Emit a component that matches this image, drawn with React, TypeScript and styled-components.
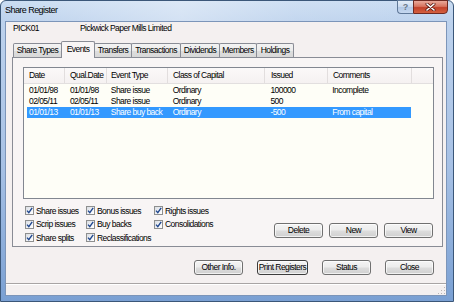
import styled, { createGlobalStyle } from 'styled-components';

const GlobalStyle = createGlobalStyle`
  html, body {
    margin: 0;
    padding: 0;
  }
  body {
    width: 454px;
    height: 302px;
    overflow: hidden;
    font-family: 'Liberation Sans', Arial, sans-serif;
  }
`;

const Window = styled.div`
  box-sizing: border-box;
  width: 454px;
  height: 302px;
  display: flex;
  flex-direction: column;
  border: 1px solid #3b5779;
  border-radius: 6px 6px 0 0;
  background: linear-gradient(to bottom, #cadcf2 0px, #bdd2ed 20px, #a7c1e5 55%, #7aa0d3 100%);
  font-size: 8.5px;
  letter-spacing: -0.55px;
  color: #000;
`;

const TitleBar = styled.div`
  height: 20px;
  display: flex;
  align-items: flex-start;
  background: linear-gradient(
    to right,
    rgba(255, 255, 255, 0) 0%,
    rgba(255, 255, 255, 0.35) 40%,
    rgba(255, 255, 255, 0.1) 65%,
    rgba(255, 255, 255, 0) 100%
  );
`;

const Title = styled.span`
  flex: 1;
  margin-left: 4px;
  font-size: 9px;
  line-height: 19px;
`;

const CaptionButtons = styled.div`
  display: flex;
  margin-right: 5px;
  margin-top: -1px;
`;

const HelpButton = styled.div`
  box-sizing: border-box;
  width: 16px;
  height: 14px;
  border: 1px solid #5f7898;
  border-right: none;
  border-radius: 0 0 0 4px;
  background: linear-gradient(to bottom, #e4edf8 0%, #c9d9ee 50%, #b2c8e6 51%, #c6d8ef 100%);
  color: #6b7888;
  font-weight: bold;
  font-size: 9px;
  line-height: 12px;
  text-align: center;
  letter-spacing: 0;
`;

const CloseButton = styled.div`
  box-sizing: border-box;
  width: 35px;
  height: 14px;
  border: 1px solid #6e2a22;
  border-radius: 0 0 4px 0;
  background: linear-gradient(to bottom, #e9a99a 0%, #d7745f 45%, #c2412a 55%, #d4603f 100%);
  display: flex;
  align-items: center;
  justify-content: center;
`;

const Client = styled.div`
  flex: 1;
  margin: 0 6px 5px 4px;
  border: 1px solid #7c95b9;
  background: #f4f0f0;
  display: flex;
  flex-direction: column;
`;

const Body = styled.div`
  flex: 1;
  padding: 0 3px 0 6px;
  border-bottom: 1px solid #a8a4a4;
  display: flex;
  flex-direction: column;
`;

const InfoRow = styled.div`
  height: 12px;
  line-height: 12px;
  display: flex;
  padding-left: 1px;
`;

const InfoCode = styled.span`
  width: 67px;
`;

const TabStrip = styled.div`
  height: 16px;
  margin-top: 7px;
  padding-left: 1px;
  display: flex;
  align-items: flex-end;
  position: relative;
  z-index: 1;
`;

const Tab = styled.div<{ $w: number; $active?: boolean }>`
  box-sizing: border-box;
  width: ${(p) => p.$w}px;
  height: ${(p) => (p.$active ? 17 : 14)}px;
  margin-bottom: ${(p) => (p.$active ? -1 : 0)}px;
  margin-left: -1px;
  border: 1px solid #898c95;
  border-bottom: none;
  border-radius: 2px 2px 0 0;
  background: ${(p) =>
    p.$active ? '#f8f5f5' : 'linear-gradient(to bottom, #f3f3f3 0%, #ebebeb 50%, #dedede 51%, #d8d8d8 100%)'};
  text-align: center;
  line-height: ${(p) => (p.$active ? 14 : 13)}px;
  white-space: nowrap;
  position: relative;
  z-index: ${(p) => (p.$active ? 2 : 1)};

  &:first-child {
    margin-left: 0;
  }
`;

const Panel = styled.div`
  box-sizing: border-box;
  width: 431px;
  height: 190px;
  border: 1px solid #898c95;
  background: #f8f5f5;
  padding: 9px 8px 0 10px;
  display: flex;
  flex-direction: column;
`;

const ListView = styled.div`
  box-sizing: border-box;
  height: 132px;
  border: 1px solid #828790;
  background: #fefef7;
  overflow: hidden;
`;

const HeaderRow = styled.div`
  height: 15px;
  display: flex;
  padding-left: 3px;
  background: linear-gradient(to bottom, #fbf9f9 0%, #f5f1f1 100%);
  border-bottom: 1px solid #e2dfdf;
`;

const HeaderCell = styled.div<{ $w: number; $pad: number }>`
  box-sizing: border-box;
  width: ${(p) => p.$w}px;
  padding-left: ${(p) => p.$pad}px;
  line-height: 15px;
  border-right: 1px solid #e2dede;
  white-space: nowrap;
`;

const Rows = styled.div`
  padding-top: 1px;
`;

const Row = styled.div<{ $selected?: boolean }>`
  width: 384px;
  height: 11px;
  margin-left: 3px;
  display: flex;
  background: ${(p) => (p.$selected ? '#3399ff' : 'transparent')};
  color: ${(p) => (p.$selected ? '#fff' : '#000')};
`;

const Cell = styled.div<{ $w: number; $pad: number }>`
  box-sizing: border-box;
  width: ${(p) => p.$w}px;
  padding-left: ${(p) => p.$pad}px;
  line-height: 11px;
  white-space: nowrap;
`;

const BottomSection = styled.div`
  display: flex;
  justify-content: space-between;
  margin-top: 5px;
`;

const CheckGrid = styled.div`
  display: grid;
  grid-template-columns: 61px 68px auto;
  grid-auto-rows: 13.5px;
  margin-left: 2px;
`;

const CheckItem = styled.label`
  display: flex;
  align-items: center;
  gap: 2px;
  white-space: nowrap;
`;

const CheckBox = styled.span`
  box-sizing: border-box;
  width: 9px;
  height: 9px;
  border: 1px solid #8e8f8f;
  background: linear-gradient(135deg, #d9dde3 0%, #f3f4f6 60%, #ffffff 100%);
  display: flex;
  align-items: center;
  justify-content: center;
`;

const ButtonRow = styled.div`
  display: flex;
  gap: 6px;
  margin-top: 19px;
  margin-right: 1px;
  align-self: flex-start;
`;

const Button = styled.button<{ $w?: number; $focus?: boolean }>`
  box-sizing: border-box;
  width: ${(p) => p.$w ?? 49}px;
  height: 15px;
  padding: 0;
  border: 1px solid ${(p) => (p.$focus ? '#3c3c3c' : '#707070')};
  border-radius: 3px;
  background: linear-gradient(to bottom, #f4f4f4 0%, #ececec 48%, #dddddd 52%, #d0d0d0 100%);
  box-shadow: inset 0 0 0 1px rgba(255, 255, 255, 0.7);
  font-family: inherit;
  font-size: 8.5px;
  letter-spacing: -0.55px;
  line-height: 13px;
  color: #000;
  white-space: nowrap;
`;

const BottomBar = styled.div`
  display: flex;
  justify-content: flex-end;
  gap: 14px;
  margin-top: 13px;
  margin-right: 9px;
`;

const StatusStrip = styled.div`
  box-sizing: border-box;
  height: 11px;
  border-top: 1px solid #ffffff;
  display: flex;
  justify-content: flex-end;
  align-items: flex-end;
`;

const columns = [
  { title: 'Date', w: 38, pad: 2 },
  { title: 'Qual.Date', w: 42, pad: 5 },
  { title: 'Event Type', w: 61, pad: 4 },
  { title: 'Class of Capital', w: 97, pad: 5 },
  { title: 'Issued', w: 63, pad: 6 },
  { title: 'Comments', w: 84, pad: 5 },
];

const rows = [
  { cells: ['01/01/98', '01/01/98', 'Share issue', 'Ordinary', '100000', 'Incomplete'] },
  { cells: ['02/05/11', '02/05/11', 'Share issue', 'Ordinary', '500', ''] },
  { cells: ['01/01/13', '01/01/13', 'Share buy back', 'Ordinary', '-500', 'From capital'], selected: true },
];

const tabs = [
  { label: 'Share Types', w: 49 },
  { label: 'Events', w: 34, active: true },
  { label: 'Transfers', w: 38 },
  { label: 'Transactions', w: 50 },
  { label: 'Dividends', w: 40 },
  { label: 'Members', w: 38 },
  { label: 'Holdings', w: 38 },
];

// listed row by row, three columns per row
const checks = [
  'Share issues',
  'Bonus issues',
  'Rights issues',
  'Scrip issues',
  'Buy backs',
  'Consolidations',
  'Share splits',
  'Reclassifications',
];

const Tick = () => (
  <svg width='7' height='7' viewBox='0 0 7 7'>
    <path d='M1 3.6 L2.8 5.6 L6.2 0.8' fill='none' stroke='#21488f' strokeWidth='1.4' />
  </svg>
);

const Grip = () => (
  <svg width='9' height='9' viewBox='0 0 9 9'>
    <g fill='#b9b5b5'>
      <rect x='7' y='1' width='1' height='1' />
      <rect x='4' y='4' width='1' height='1' />
      <rect x='7' y='4' width='1' height='1' />
      <rect x='1' y='7' width='1' height='1' />
      <rect x='4' y='7' width='1' height='1' />
      <rect x='7' y='7' width='1' height='1' />
    </g>
  </svg>
);

const App: React.FC = () => {
  return (
    <>
      <GlobalStyle />
      <Window>
        <TitleBar>
          <Title>Share Register</Title>
          <CaptionButtons>
            <HelpButton>?</HelpButton>
            <CloseButton>
              <svg width='11' height='8' viewBox='0 0 11 8'>
                <path
                  d='M2 1 L9 7 M9 1 L2 7'
                  stroke='#5a1a12'
                  strokeWidth='3'
                  strokeLinecap='round'
                />
                <path d='M2 1 L9 7 M9 1 L2 7' stroke='#fff' strokeWidth='1.6' strokeLinecap='round' />
              </svg>
            </CloseButton>
          </CaptionButtons>
        </TitleBar>

        <Client>
          <Body>
            <InfoRow>
              <InfoCode>PICK01</InfoCode>
              <span>Pickwick Paper Mills Limited</span>
            </InfoRow>

            <TabStrip>
              {tabs.map((t) => (
                <Tab key={t.label} $w={t.w} $active={t.active}>
                  {t.label}
                </Tab>
              ))}
            </TabStrip>

            <Panel>
              <ListView>
                <HeaderRow>
                  {columns.map((c) => (
                    <HeaderCell key={c.title} $w={c.w} $pad={c.pad}>
                      {c.title}
                    </HeaderCell>
                  ))}
                </HeaderRow>
                <Rows>
                  {rows.map((r, i) => (
                    <Row key={i} $selected={r.selected}>
                      {r.cells.map((v, j) => (
                        <Cell key={j} $w={columns[j].w} $pad={columns[j].pad}>
                          {v}
                        </Cell>
                      ))}
                    </Row>
                  ))}
                </Rows>
              </ListView>

              <BottomSection>
                <CheckGrid>
                  {checks.map((c) => (
                    <CheckItem key={c}>
                      <CheckBox>
                        <Tick />
                      </CheckBox>
                      {c}
                    </CheckItem>
                  ))}
                </CheckGrid>
                <ButtonRow>
                  <Button>Delete</Button>
                  <Button>New</Button>
                  <Button>View</Button>
                </ButtonRow>
              </BottomSection>
            </Panel>

            <BottomBar>
              <Button>Other Info.</Button>
              <Button $w={51} $focus>
                Print Registers
              </Button>
              <Button>Status</Button>
              <Button>Close</Button>
            </BottomBar>
          </Body>
          <StatusStrip>
            <Grip />
          </StatusStrip>
        </Client>
      </Window>
    </>
  );
};

export default App;
